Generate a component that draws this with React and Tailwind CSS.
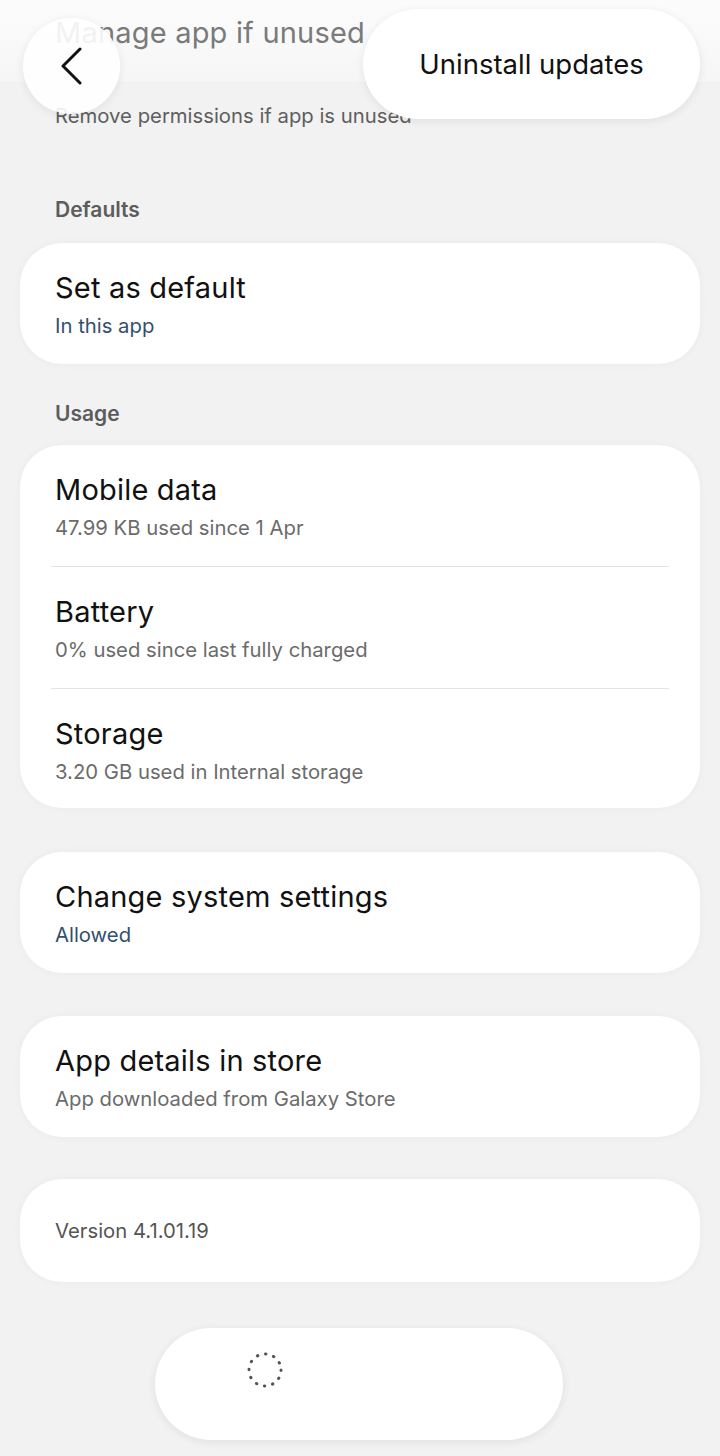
import React from "react";

const Row = ({ title, sub, subColor = "text-[#6b6b6b]", divider = false, pb = "pb-[24px]" }) => (
  <div className="px-[35px]">
    <div className={`pt-[27px] ${pb}`}>
      <p className="text-[29px] leading-[36px] tracking-[0.2px] text-[#111]">{title}</p>
      <p className={`mt-[6px] text-[20.3px] leading-[28px] ${subColor}`}>{sub}</p>
    </div>
    {divider && <div className="h-px bg-[#e3e3e3] mx-[-4px]" />}
  </div>
);

const Card = ({ children, className = "" }) => (
  <div className={`mx-[20px] bg-white rounded-[42px] shadow-[0_0_8px_rgba(0,0,0,0.04)] ${className}`}>
    {children}
  </div>
);

const SectionLabel = ({ children }) => (
  <p className="px-[55px] text-[21px] leading-[28px] font-semibold text-[#5c5c5c]">{children}</p>
);

export default function App() {
  return (
    <div className="relative w-[720px] h-[1456px] overflow-hidden bg-[#f2f2f2] font-['Inter','Roboto',sans-serif]">
      {/* scrolled list */}
      <div className="flex flex-col">
        <div className="h-[82px] bg-gradient-to-b from-[#fcfcfc] to-[#f6f6f6] px-[55px] pt-[15px]">
          <p className="text-[29px] leading-[36px] tracking-[0.2px] text-[#7a7a7a]">Manage app if unused</p>
        </div>
        <p className="px-[55px] mt-[20px] text-[20.3px] leading-[28px] text-[#5e5e5e]">
          Remove permissions if app is unused
        </p>

        <div className="mt-[66px]">
          <SectionLabel>Defaults</SectionLabel>
        </div>
        <Card className="mt-[19px]">
          <Row title="Set as default" sub="In this app" subColor="text-[#33506e]" />
        </Card>

        <div className="mt-[36px]">
          <SectionLabel>Usage</SectionLabel>
        </div>
        <Card className="mt-[17px]">
          <Row title="Mobile data" sub="47.99 KB used since 1 Apr" divider />
          <Row title="Battery" sub="0% used since last fully charged" divider />
          <Row title="Storage" sub="3.20 GB used in Internal storage" pb="pb-[22px]" />
        </Card>

        <Card className="mt-[44px]">
          <Row title="Change system settings" sub="Allowed" subColor="text-[#33506e]" />
        </Card>

        <Card className="mt-[43px]">
          <Row title="App details in store" sub="App downloaded from Galaxy Store" />
        </Card>

        <Card className="mt-[42px] h-[103px] flex items-center px-[35px]">
          <p className="text-[20.3px] leading-[28px] text-[#555]">Version 4.1.01.19</p>
        </Card>
      </div>

      {/* floating top bar */}
      <button className="absolute left-[23px] top-[18px] w-[97px] h-[96px] rounded-full bg-white/90 shadow-[0_2px_10px_rgba(0,0,0,0.08)] flex items-center justify-center">
        <svg width="24" height="38" viewBox="0 0 24 38" className="ml-[-2px]">
          <path d="M21 2 L4 19 L21 36" fill="none" stroke="#111" strokeWidth="3" strokeLinecap="round" strokeLinejoin="round" />
        </svg>
      </button>
      <div className="absolute left-[363px] top-[9px] w-[337px] h-[110px] rounded-full bg-white shadow-[0_2px_10px_rgba(0,0,0,0.08)] flex items-center justify-center">
        <span className="text-[27.5px] leading-[36px] text-[#111]">Uninstall updates</span>
      </div>

      {/* floating bottom bar */}
      <div className="absolute left-[155px] top-[1328px] w-[408px] h-[112px] rounded-full bg-white shadow-[0_2px_10px_rgba(0,0,0,0.08)]">
        <svg width="40" height="40" viewBox="0 0 40 40" className="absolute left-[90px] top-[22px]">
          <circle cx="20" cy="20" r="16" fill="none" stroke="#555" strokeWidth="3" strokeLinecap="round" strokeDasharray="0.5 7.88" />
        </svg>
      </div>
    </div>
  );
}
